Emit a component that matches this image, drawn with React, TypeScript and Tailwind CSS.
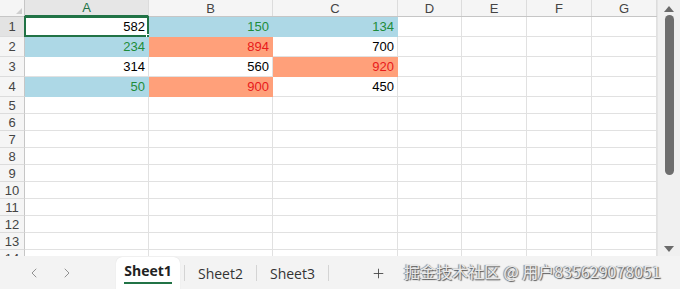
import { ChevronLeft, ChevronRight, Plus } from 'lucide-react';

type Cell = { v: string; tone?: 'green' | 'red'; fill?: 'blue' | 'orange' };

const columns = [
  { label: 'A', width: 'w-[124px]' },
  { label: 'B', width: 'w-[124px]' },
  { label: 'C', width: 'w-[125px]' },
  { label: 'D', width: 'w-[64px]' },
  { label: 'E', width: 'w-[65px]' },
  { label: 'F', width: 'w-[65px]' },
  { label: 'G', width: 'w-[65px]' },
];

const data: Cell[][] = [
  [{ v: '582' }, { v: '150', tone: 'green', fill: 'blue' }, { v: '134', tone: 'green', fill: 'blue' }],
  [{ v: '234', tone: 'green', fill: 'blue' }, { v: '894', tone: 'red', fill: 'orange' }, { v: '700' }],
  [{ v: '314' }, { v: '560' }, { v: '920', tone: 'red', fill: 'orange' }],
  [{ v: '50', tone: 'green', fill: 'blue' }, { v: '900', tone: 'red', fill: 'orange' }, { v: '450' }],
];

const rows = Array.from({ length: 14 }, (_, i) => i + 1);

const fillClass = (c?: Cell) => {
  if (c?.fill === 'blue') return 'bg-[#add8e6] border-[#add8e6]';
  if (c?.fill === 'orange') return 'bg-[#ffa07a] border-[#ffa07a]';
  return 'bg-white border-[#e1e1e1]';
};

const toneClass = (c?: Cell) => {
  if (c?.tone === 'green') return 'text-[#1e8c3a]';
  if (c?.tone === 'red') return 'text-[#e81a1a]';
  return 'text-black';
};

export default function App() {
  return (
    <div className="w-[680px] h-[289px] flex flex-col bg-[#f3f3f3] overflow-hidden font-['Liberation_Sans',sans-serif]">
      {/* Grid + scrollbar */}
      <div className="flex h-[256px] overflow-hidden">
        <div className="flex flex-col w-[657px] bg-white overflow-hidden">
          {/* Column headers */}
          <div className="flex h-[17px] shrink-0 bg-[#f5f5f5] border-b border-[#c6c6c6]">
            <div className="w-[25px] shrink-0 border-r border-[#c6c6c6] relative">
              <div className="absolute right-[2px] bottom-[2px] w-0 h-0 border-l-[6px] border-l-transparent border-b-[6px] border-b-[#cfcfcf]" />
            </div>
            {columns.map((col, i) => (
              <div
                key={col.label}
                className={`${col.width} shrink-0 flex items-center justify-center text-[13px] leading-none border-r border-[#dcdcdc] ${
                  i === 0 ? 'bg-[#e6e6e6] text-[#217346] border-b-2 border-b-[#217346] -mb-px' : 'text-[#444]'
                }`}
              >
                {col.label}
              </div>
            ))}
          </div>

          {/* Rows */}
          {rows.map((r) => {
            const tall = r <= 4;
            const rowData = data[r - 1] || [];
            return (
              <div key={r} className={`flex shrink-0 ${tall ? 'h-[20px]' : 'h-[17px]'}`}>
                <div
                  className={`w-[25px] shrink-0 flex items-center justify-center text-[13px] leading-none text-[#444] border-r border-[#c6c6c6] border-b border-b-[#dcdcdc] ${
                    r === 1 ? 'bg-[#e3e3e3]' : 'bg-[#f5f5f5]'
                  }`}
                >
                  {r}
                </div>
                {columns.map((col, ci) => {
                  const c = rowData[ci];
                  return (
                    <div
                      key={col.label}
                      className={`${col.width} shrink-0 relative flex items-center justify-end pr-[3px] text-[13px] leading-none border-r border-b ${fillClass(c)} ${toneClass(c)}`}
                    >
                      {c?.v}
                      {r === 1 && ci === 0 && (
                        <>
                          <div className="absolute -left-px -top-px -right-px -bottom-px border-2 border-[#217346] pointer-events-none" />
                          <div className="absolute -right-[4px] -bottom-[4px] w-[6px] h-[6px] bg-[#217346] border border-white" />
                        </>
                      )}
                    </div>
                  );
                })}
              </div>
            );
          })}
        </div>

        {/* Vertical scrollbar */}
        <div className="w-[23px] shrink-0 bg-[#f0f0f0] border-l border-[#e4e4e4] flex flex-col items-center pt-[6px] pb-[4px]">
          <div className="w-0 h-0 border-l-[5px] border-r-[5px] border-b-[6px] border-l-transparent border-r-transparent border-b-[#6b6b6b]" />
          <div className="mt-[3px] w-[9px] h-[160px] rounded-full bg-[#6e6e6e]" />
          <div className="flex-1" />
          <div className="w-0 h-0 border-l-[5px] border-r-[5px] border-t-[6px] border-l-transparent border-r-transparent border-t-[#6b6b6b]" />
        </div>
      </div>

      {/* Sheet tab bar */}
      <div className="relative flex-1 flex items-end font-['Open_Sans','Noto_Sans',sans-serif]">
        <div className="flex items-center gap-[17px] pl-[26px] h-[32px] text-[#8a8a8a]">
          <ChevronLeft className="w-[16px] h-[16px]" strokeWidth={1.4} />
          <ChevronRight className="w-[16px] h-[16px]" strokeWidth={1.4} />
        </div>
        <div className="ml-[41px] flex items-center h-[32px]">
          <div className="h-[32px] w-[64px] bg-white rounded-t-[6px] flex flex-col items-center justify-center shadow-[0_0_1px_rgba(0,0,0,0.15)]">
            <span className="text-[14px] font-bold text-[#222] leading-[18px]">Sheet1</span>
            <span className="mt-[2px] h-[2px] w-[48px] bg-[#217346]" />
          </div>
          <span className="ml-[4px] h-[16px] w-px bg-[#d4d4d4]" />
          <span className="px-[13px] text-[14px] text-[#333]">Sheet2</span>
          <span className="h-[16px] w-px bg-[#d4d4d4]" />
          <span className="px-[13px] text-[14px] text-[#333]">Sheet3</span>
          <span className="h-[16px] w-px bg-[#d4d4d4]" />
          <Plus className="ml-[42px] w-[15px] h-[15px] text-[#444]" strokeWidth={1.4} />
        </div>

        {/* Watermark */}
        <div className="absolute left-[404px] top-[7px] text-[16px] leading-none whitespace-nowrap text-[#e8e8e8] [text-shadow:1px_1px_1px_#555,-1px_0_1px_#777] font-['Noto_Sans_CJK_SC','Noto_Sans',sans-serif]">
          掘金技术社区 @ 用户835629078051
        </div>
      </div>
    </div>
  );
}
